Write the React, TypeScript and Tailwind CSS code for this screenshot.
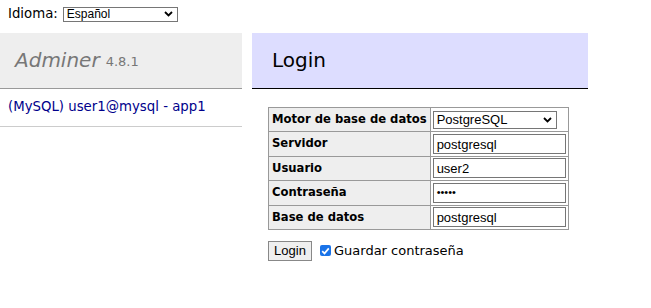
import React from 'react';

const verdana = { fontFamily: '"DejaVu Sans", Verdana, sans-serif' };

const Chevron: React.FC = () => (
  <svg width="9" height="6" viewBox="0 0 9 6" className="pointer-events-none">
    <path d="M1 1 L4.5 4.5 L8 1" fill="none" stroke="#000" strokeWidth="1.8" />
  </svg>
);

const FakeSelect: React.FC<{ value: string; className: string }> = ({ value, className }) => (
  <div
    className={`flex items-center justify-between border border-[#767676] bg-white pl-[3px] pr-[4px] font-['Liberation_Sans',Arial,sans-serif] leading-none text-black ${className}`}
  >
    <span>{value}</span>
    <Chevron />
  </div>
);

const rows: { label: string; value: string; kind: 'select' | 'text' | 'password' }[] = [
  { label: 'Motor de base de datos', value: 'PostgreSQL', kind: 'select' },
  { label: 'Servidor', value: 'postgresql', kind: 'text' },
  { label: 'Usuario', value: 'user2', kind: 'text' },
  { label: 'Contraseña', value: '•••••', kind: 'password' },
  { label: 'Base de datos', value: 'postgresql', kind: 'text' },
];

const App: React.FC = () => {
  return (
    <div className="min-h-screen w-[651px] bg-white text-[13.3px] text-black" style={verdana}>
      {/* idioma */}
      <div className="flex h-[33px] items-center gap-[5px] pl-[8px] pb-[5px]">
        <span>Idioma:</span>
        <FakeSelect value="Español" className="h-[15px] w-[115px] text-[12px]" />
      </div>

      <div className="flex gap-[10px]">
        {/* menu */}
        <div className="w-[242px]">
          <h1 className="flex h-[56px] items-center border-b border-[#999] bg-[#eee] pl-[15px] pb-[2px] text-[#777]">
            <span className="text-[20px] italic">Adminer</span>
            <span className="ml-[6px] mt-[4px] text-[13px]">4.8.1</span>
          </h1>
          <div className="flex h-[38px] items-center border-b border-[#ccc] pl-[8px] pb-[2px]">
            <a className="text-[#00008b]">(MySQL) user1@mysql - app1</a>
          </div>
        </div>

        {/* content */}
        <div className="w-[336px]">
          <h2 className="flex h-[56px] items-center border-b border-black bg-[#ddf] pl-[20px] pb-[2px] text-[20px]">
            Login
          </h2>
          <table className="ml-[16px] mt-[18px] border-collapse">
            <tbody>
              {rows.map((r) => (
                <tr key={r.label} className="h-[24.4px]">
                  <th className="whitespace-nowrap border border-[#999] bg-[#eee] px-[3px] text-left text-[11.6px] font-bold">
                    {r.label}
                  </th>
                  <td className="border border-[#999] px-[2px] py-0">
                    {r.kind === 'select' ? (
                      <FakeSelect value={r.value} className="h-[18px] w-[124px] text-[13px]" />
                    ) : (
                      <div
                        className={`flex h-[20px] w-[133px] items-center border border-[#767676] bg-white px-[3px] font-['Liberation_Sans',Arial,sans-serif] leading-none text-black ${
                          r.kind === 'password' ? 'text-[11px]' : 'text-[13px]'
                        }`}
                      >
                        {r.value}
                      </div>
                    )}
                  </td>
                </tr>
              ))}
            </tbody>
          </table>

          <div className="ml-[16px] mt-[11px] flex items-center">
            <button className="flex h-[20px] w-[44px] items-center justify-center border border-[#888] bg-[#efefef] font-['Liberation_Sans',Arial,sans-serif] text-[13px] leading-none">
              Login
            </button>
            <span className="ml-[8px] flex h-[11px] w-[11px] items-center justify-center rounded-[2px] bg-[#1a73e8]">
              <svg width="9" height="8" viewBox="0 0 9 8">
                <path d="M1.2 4.2 L3.5 6.4 L7.8 1.4" fill="none" stroke="#fff" strokeWidth="1.7" />
              </svg>
            </span>
            <span className="ml-[3px] text-[13px]">Guardar contraseña</span>
          </div>
        </div>
      </div>
    </div>
  );
};

export default App;
